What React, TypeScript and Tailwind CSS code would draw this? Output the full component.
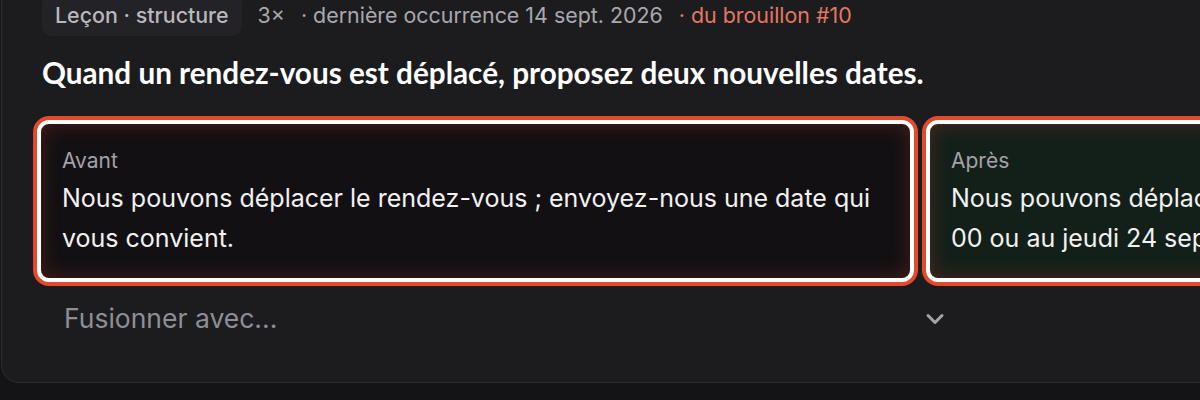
import { ChevronDown } from "lucide-react";

const sans = "font-['Inter','Noto_Sans',sans-serif]";

function CompareBox({ label, text, tone }: { label: string; text: React.ReactNode; tone: "before" | "after" }) {
  return (
    <div
      className={`rounded-[12px] border-4 border-white px-[21px] pb-[20px] pt-[23px] ring-4 ring-[#e24a2b] shadow-[inset_0_0_20px_rgba(200,60,40,0.3)] ${
        tone === "before" ? "bg-[#121013]" : "bg-[#13201a]"
      }`}
    >
      <div className="text-[21px] leading-[28px] text-[#a3a2a8]">{label}</div>
      <p className="mt-[3px] text-[25px] leading-[40px] text-[#f2f2f2]">{text}</p>
    </div>
  );
}

export default function App() {
  return (
    <div className={`h-[400px] w-[1200px] overflow-hidden bg-[#141416] ${sans}`}>
      <div className="ml-[1px] -mt-[7px] w-[1900px] rounded-b-[18px] border border-[#2d2c31] bg-[#1c1c1f] px-[40px] pb-[35px]">
        {/* meta row */}
        <div className="flex items-center gap-4 text-[21.4px] text-[#a9a8ae]">
          <span className="rounded-[10px] bg-[#232226] px-[13px] py-[6px] leading-[30px] font-medium text-[#b9b8bd]">
            Leçon · structure
          </span>
          <span>3×</span>
          <span>· dernière occurrence 14 sept. 2026</span>
          <span className="text-[#e2785f]">· du brouillon #10</span>
        </div>

        <h2 className="mt-[19px] font-['Lato',sans-serif] text-[29.7px] font-bold leading-[36px] text-white">
          Quand un rendez-vous est déplacé, proposez deux nouvelles dates.
        </h2>

        <div className="-ml-[5px] mt-[29px] grid grid-cols-[877px_877px] gap-[12px]">
          <CompareBox
            tone="before"
            label="Avant"
            text="Nous pouvons déplacer le rendez-vous ; envoyez-nous une date qui vous convient."
          />
          <CompareBox
            tone="after"
            label="Après"
            text={
              <>
                Nous pouvons déplacer le rendez-vous au mardi 22 sept. à 10 h
                <br />
                00 ou au jeudi 24 septembre à 14 h 00.
              </>
            }
          />
        </div>

        <button
          type="button"
          className="mt-[9px] flex h-[56px] w-[923px] items-center justify-between rounded-[10px] pl-[22px] pr-4 text-[26.5px] text-[#8f8e95]"
        >
          <span>Fusionner avec...</span>
          <ChevronDown className="h-[28px] w-[28px] text-[#a4a3a9]" strokeWidth={2.6} />
        </button>
      </div>
    </div>
  );
}
